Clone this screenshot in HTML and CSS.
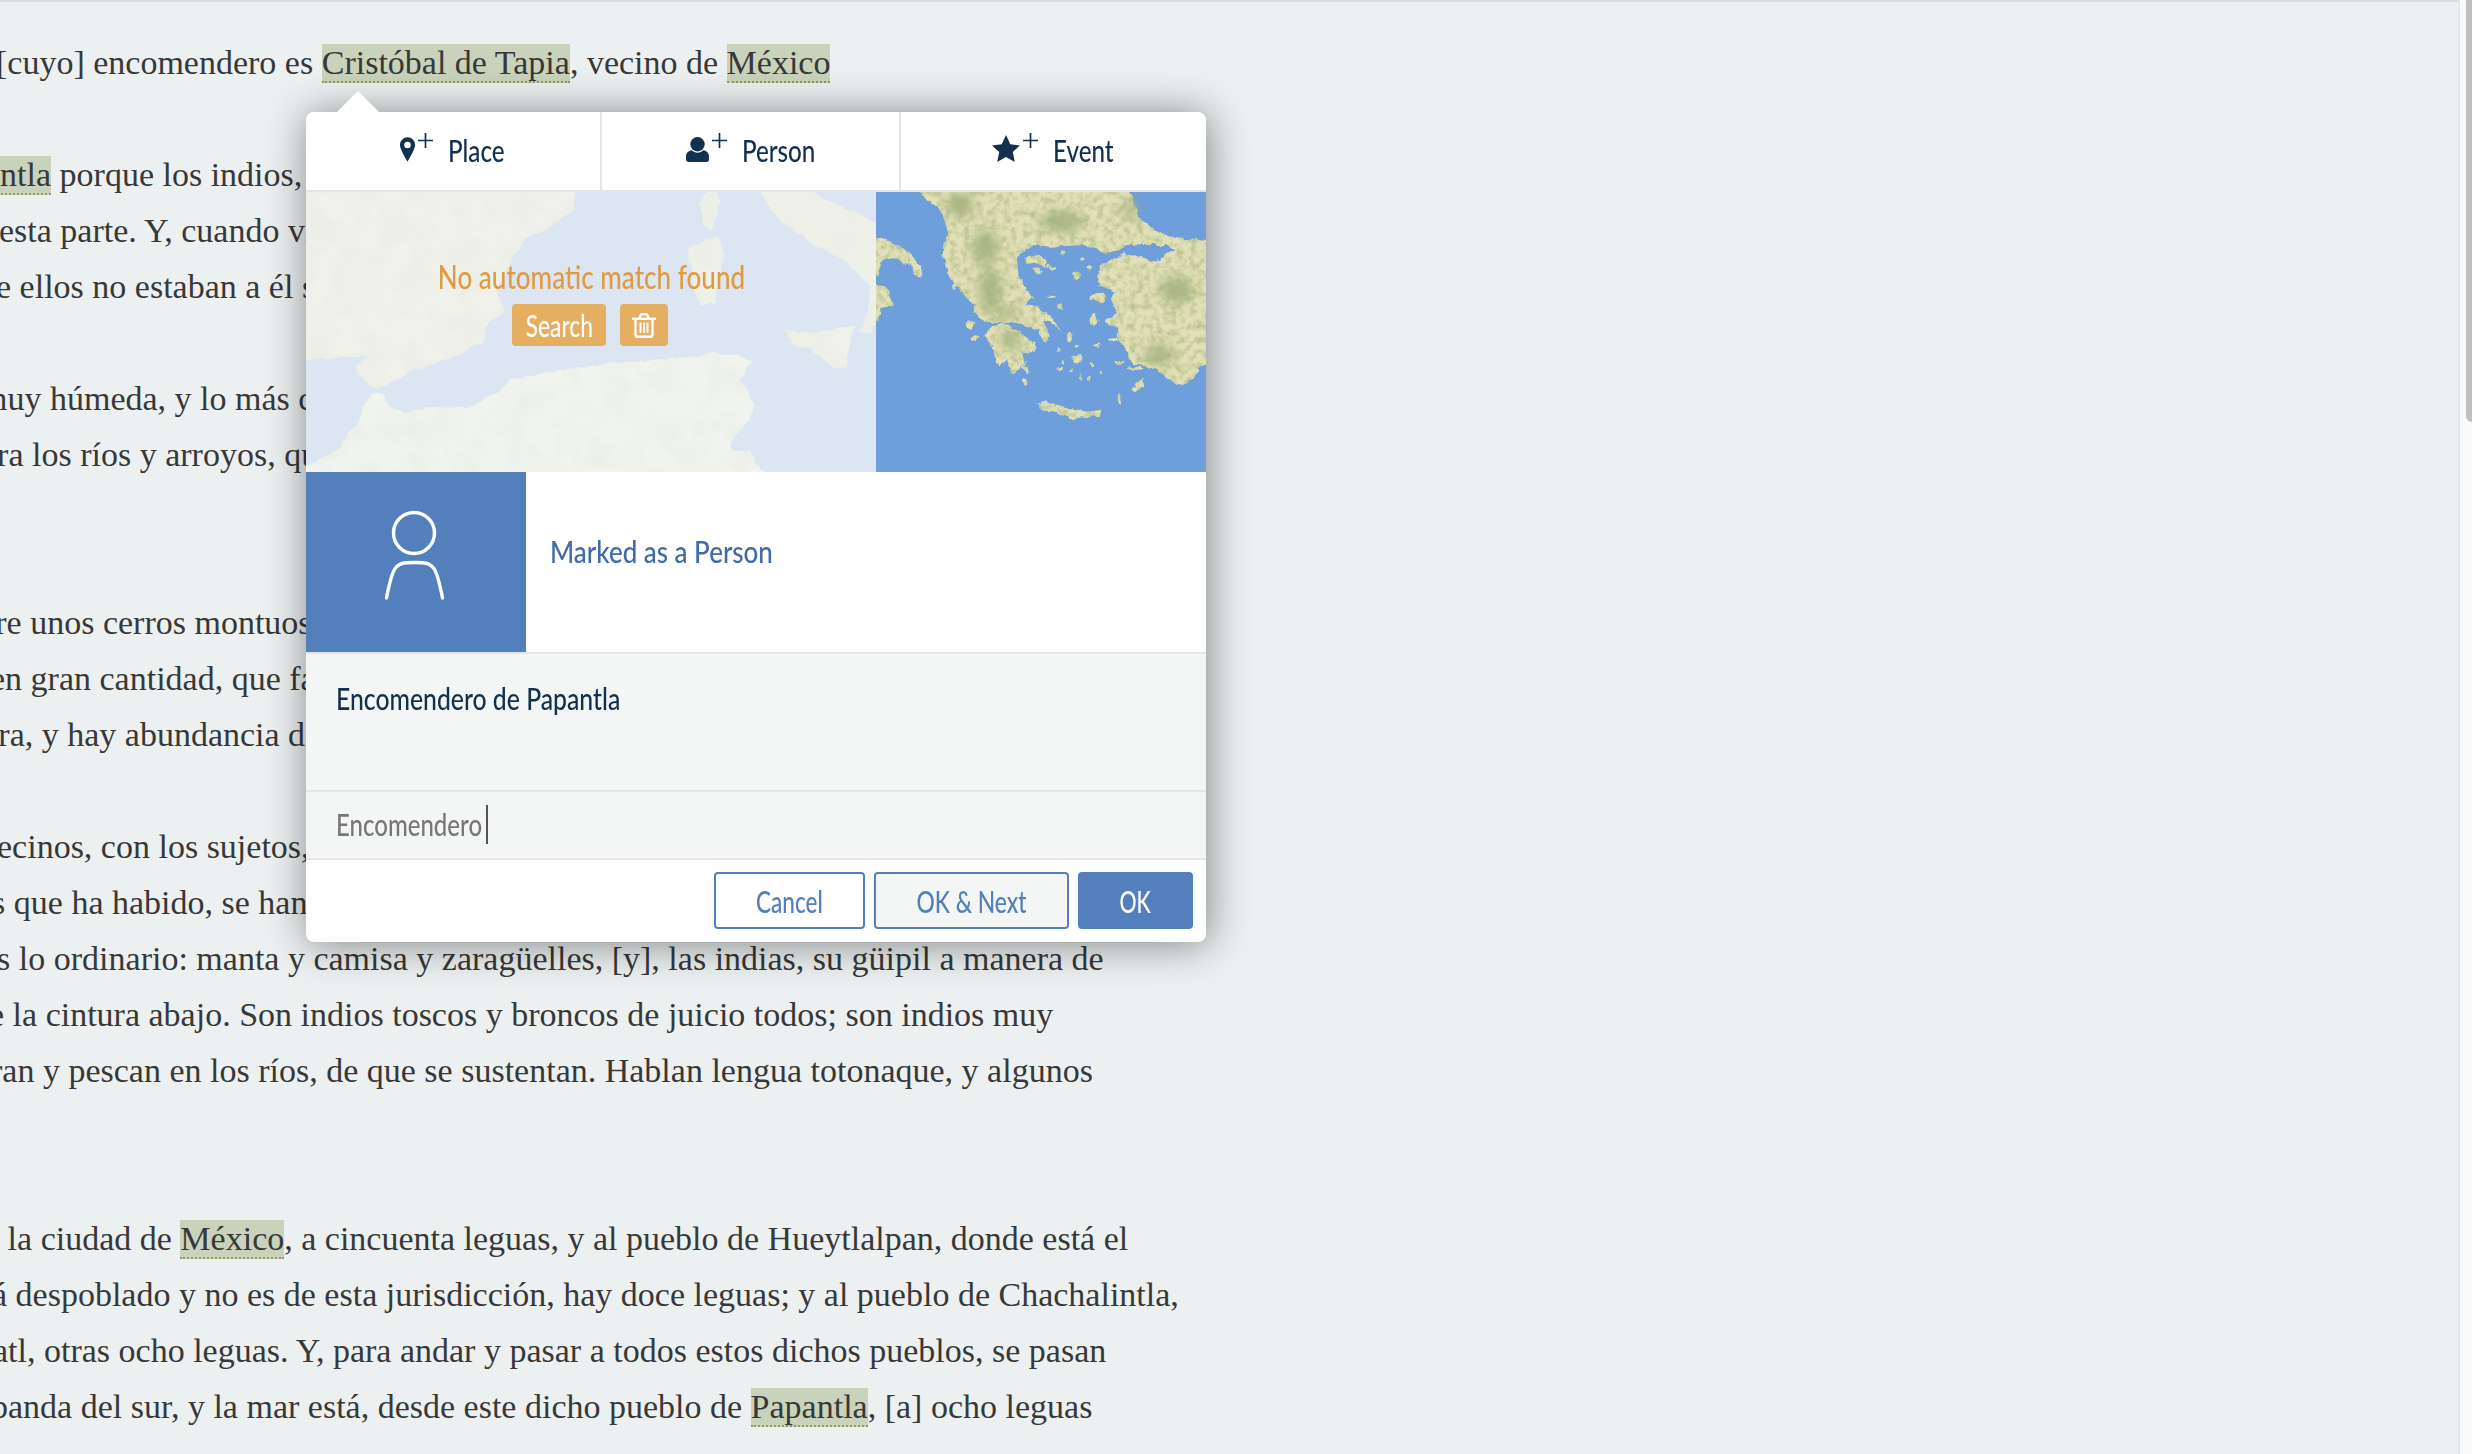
FILE: index.html
```html
<!DOCTYPE html>
<html lang="es">
<head>
<meta charset="utf-8">
<title>Annotation</title>
<link rel="stylesheet" href="styles.css">
</head>
<body>
<div class="page">
  <main class="doc">
    <div class="para">
      <p class="ln i-4">[cuyo] encomendero es <mark class="tag">Cristóbal de Tapia</mark>, vecino de <mark class="tag">México</mark></p>
    </div>
    <div class="para">
      <p class="ln i-pap"><mark class="tag">Papantla</mark> porque los indios, </p>
      <p class="ln i-1">esta parte. Y, cuando vienen</p>
      <p class="ln i-de">de ellos no estaban a él sujetos</p>
    </div>
    <div class="para wide">
      <p class="ln i-muy">muy húmeda, y lo más cerca</p>
      <p class="ln i-para">para los ríos y arroyos, que</p>
    </div>
    <div class="para">
      <p class="ln i-sobre">sobre unos cerros montuosos</p>
      <p class="ln i-en">en gran cantidad, que falta</p>
      <p class="ln i-tierra">tierra, y hay abundancia de</p>
    </div>
    <div class="para wide">
      <p class="ln i-vec">vecinos, con los sujetos,</p>
      <p class="ln i-anos">años que ha habido, se han</p>
      <p class="ln i-es">es lo ordinario: manta y camisa y zaragüelles, [y], las indias, su güipil a manera de</p>
      <p class="ln i-dela">de la cintura abajo. Son indios toscos y broncos de juicio todos; son indios muy</p>
      <p class="ln i-ran">ran y pescan en los ríos, de que se sustentan. Hablan lengua totonaque, y algunos</p>
    </div>
    <div class="para">
      <p class="ln i-ala">a la ciudad de <mark class="tag">México</mark>, a cincuenta leguas, y al pueblo de Hueytlalpan, donde está el</p>
      <p class="ln i-a">á despoblado y no es de esta jurisdicción, hay doce leguas; y al pueblo de Chachalintla,</p>
      <p class="ln i-atl">atl, otras ocho leguas. Y, para andar y pasar a todos estos dichos pueblos, se pasan</p>
      <p class="ln i-banda">banda del sur, y la mar está, desde este dicho pueblo de <mark class="tag">Papantla</mark>, [a] ocho leguas</p>
    </div>
  </main>
  <aside class="scrollbar"><div class="thumb"></div></aside>
</div>

<section class="popup">
  <div class="arrow"></div>
  <div class="card">
    <nav class="tabs">
      <div class="tab t1">
        <svg class="ico-pin" viewBox="0 0 16 26"><path fill="#12304f" fill-rule="evenodd" d="M8 0a8 8 0 0 1 8 8.200c0 4.300-4.600 12-8 17.800C4.600 20.200 0 12.500 0 8.200A8 8 0 0 1 8 0zm0 4.600a3.500 3.500 0 1 0 0 7 3.500 3.500 0 0 0 0-7z"/></svg>
        <svg class="ico-plus" viewBox="0 0 15 15"><path stroke="#12304f" stroke-width="1.700" d="M7.500 0v15M0 7.500h15"/></svg>
        <span class="tab-label"><span class="nar lbl-tab">Place</span></span>
      </div>
      <div class="tab t2">
        <svg class="ico-user" viewBox="0 0 24 26"><g fill="#12304f"><ellipse cx="12" cy="7.500" rx="7.500" ry="7.500"/><path d="M6 13.800c1.500 1.500 3.700 2.500 6 2.500s4.500-1 6-2.500c3.500.5 6 3 6 6.500v3.200c0 1.400-1.100 2.500-2.500 2.500h-19A2.500 2.500 0 0 1 0 23.500v-3.200c0-3.500 2.500-6 6-6.500z"/></g></svg>
        <svg class="ico-plus" viewBox="0 0 15 15"><path stroke="#12304f" stroke-width="1.700" d="M7.500 0v15M0 7.500h15"/></svg>
        <span class="tab-label"><span class="nar lbl-tab">Person</span></span>
      </div>
      <div class="tab t3">
        <svg class="ico-star" viewBox="0 0 28 27"><path fill="#12304f" d="M14 0l4.300 9.300 9.700 1.100-7.200 6.700 2 9.900-8.800-5-8.800 5 2-9.900L0 10.400l9.700-1.100z"/></svg>
        <svg class="ico-plus" viewBox="0 0 15 15"><path stroke="#12304f" stroke-width="1.700" d="M7.500 0v15M0 7.500h15"/></svg>
        <span class="tab-label"><span class="nar lbl-tab">Event</span></span>
      </div>
    </nav>

    <div class="map">
      <svg class="map-left" viewBox="0 0 570 280" preserveAspectRatio="none">
        <defs>
          <filter id="pale" filterUnits="userSpaceOnUse" x="0" y="0" width="570" height="280" color-interpolation-filters="sRGB">
            <feTurbulence type="fractalNoise" baseFrequency=".08" numOctaves="3" seed="7" result="d"/>
            <feDisplacementMap in="SourceGraphic" in2="d" scale="6" xChannelSelector="R" yChannelSelector="G" result="land"/>
            <feTurbulence type="fractalNoise" baseFrequency=".04" numOctaves="4" seed="3" result="t"/>
            <feColorMatrix in="t" type="matrix" values="0 0 0 0 .90  0 0 0 0 .92  0 0 0 0 .88  1 0 0 0 -.4" result="g"/>
            <feComposite in="g" in2="land" operator="in" result="gl"/>
            <feMerge><feMergeNode in="land"/><feMergeNode in="gl"/></feMerge>
          </filter>
        </defs>
        <rect width="570" height="280" fill="#dce6f2"/>
        <g filter="url(#pale)">
          <path fill="#eff1ea" d="M-10-10H272L266 18 246 35 220 46 205 70 190 98 199 118 179 135 177 151 142 168 116 175 74 195 64 195 49 176 61 165 31 165-10 171Z"/>
          <path fill="#f1f3ee" d="M-10 280 31 258 53 228 64 201 74 201 83 215 98 220 127 215 160 216 190 201 205 188 253 178 308 171 357 168 412 161 427 163 447 168 434 188 447 211 445 228 427 245 425 258 445 258 449 271 468 290-10 290Z"/>
          <path fill="#edf0e8" d="M394 11 405-6 414 5 412 18 406 38 399 33Z"/>
          <path fill="#eff1ea" d="M382 58 401 48 412 45 419 65 412 88 410 111 394 113 388 98 386 75Z"/>
          <path fill="#eff1e8" d="M449-6 471 25 505 51 542 71 564 95 562 121 553 140 564 141 580 121V41L564 28 549 21 519 8 500-6Z"/>
          <path fill="#eff1ea" d="M480 138 512 141 549 133 542 161 540 176 527 175 505 158 486 151Z"/>
        </g>
      </svg>
      <svg class="map-right" viewBox="18 6 990 840" preserveAspectRatio="none">
        <defs>
          <filter id="terrain" filterUnits="userSpaceOnUse" x="18" y="6" width="990" height="840" color-interpolation-filters="sRGB">
            <feTurbulence type="fractalNoise" baseFrequency=".045" numOctaves="3" seed="11" result="d"/>
            <feDisplacementMap in="SourceGraphic" in2="d" scale="18" xChannelSelector="R" yChannelSelector="G" result="land"/>
            <feTurbulence type="fractalNoise" baseFrequency=".05" numOctaves="4" seed="5" result="t"/>
            <feColorMatrix in="t" type="matrix" values="0 0 0 0 .64  0 0 0 0 .70  0 0 0 0 .50  1.500 0 0 0 -.6" result="g"/>
            <feComposite in="g" in2="land" operator="in" result="gl"/>
            <feMerge><feMergeNode in="land"/><feMergeNode in="gl"/></feMerge>
          </filter>
          <filter id="soft" x="-50%" y="-50%" width="200%" height="200%"><feGaussianBlur stdDeviation="16"/></filter>
        </defs>
        <rect x="18" y="6" width="990" height="840" fill="#6f9fdb"/>
        <g filter="url(#terrain)">
          <g fill="#e2e0b6">
            <path d="M120-20H775L790 40 810 85 860 125 920 145 1030 155V520L990 525 970 570 925 585 890 565 860 540 830 530 790 520 770 490 760 460 740 440 745 410 700 395 740 370 725 330 735 305 690 290 680 260 695 225 730 205 770 190 860 215 880 195 915 180 890 165 770 165 740 185 700 195 680 175 640 165 540 170 500 165 470 175 440 205 445 250 470 300 490 325 465 345 500 350 540 375 575 425 545 400 520 390 540 440 525 455 505 420 470 410 430 395 385 400 345 395 305 365 320 345 290 325 260 285 240 270 232 230 218 205 220 165 235 130 225 95 215 65 175 30Z"/>
            <path d="M460 205 510 195 530 215 520 228 495 218 470 222Z"/>
            <path d="M490 235 505 230 515 250 500 255Z"/>
            <path d="M525 225 535 222 555 232 550 240Z"/>
            <path d="M340 435 365 410 400 400 440 420 470 440 495 465 490 485 460 490 475 555 450 530 430 558 410 510 385 525 370 495 360 460Z"/>
            <path d="M505 640 520 630 560 645 600 655 650 665 692 660 690 677 640 682 600 688 560 665 510 660Z"/>
            <path d="M788 600 800 575 824 562 815 590 798 607Z"/>
            <path d="M10 140 60 155 110 180 150 225 158 258 145 266 120 225 70 205 40 210 25 255H10Z"/>
            <path d="M10 285 50 290 68 345 35 350 22 395H10Z"/>
            <circle cx="620" cy="258" r="13"/><circle cx="578" cy="188" r="8"/><ellipse cx="688" cy="323" rx="24" ry="14"/><ellipse cx="672" cy="390" rx="10" ry="19"/><ellipse cx="300" cy="404" rx="13" ry="13"/><ellipse cx="315" cy="444" rx="10" ry="8"/><ellipse cx="465" cy="575" rx="7" ry="9"/><ellipse cx="255" cy="285" rx="6" ry="18"/><ellipse cx="660" cy="235" rx="11" ry="6"/><ellipse cx="640" cy="208" rx="6" ry="5"/><ellipse cx="572" cy="350" rx="7" ry="9"/><ellipse cx="625" cy="505" rx="18" ry="11"/><ellipse cx="570" cy="535" rx="11" ry="5"/><ellipse cx="580" cy="515" rx="5" ry="5"/><ellipse cx="600" cy="440" rx="5" ry="14"/><ellipse cx="620" cy="470" rx="9" ry="5"/><ellipse cx="680" cy="462" rx="12" ry="5"/><ellipse cx="732" cy="450" rx="16" ry="5"/><ellipse cx="665" cy="525" rx="6" ry="7"/><ellipse cx="630" cy="560" rx="4" ry="6"/><ellipse cx="695" cy="548" rx="5" ry="5"/><ellipse cx="750" cy="628" rx="4" ry="18"/><ellipse cx="745" cy="520" rx="12" ry="5"/><ellipse cx="795" cy="535" rx="22" ry="5"/><ellipse cx="565" cy="480" rx="4" ry="8"/><ellipse cx="540" cy="320" rx="14" ry="3"/><ellipse cx="600" cy="540" rx="6" ry="3"/><ellipse cx="655" cy="565" rx="4" ry="4"/>
          </g>
          <g fill="#a3b07c" filter="url(#soft)" opacity=".85">
            <ellipse cx="575" cy="95" rx="65" ry="32"/>
            <ellipse cx="270" cy="45" rx="42" ry="36"/>
            <ellipse cx="345" cy="170" rx="40" ry="50"/>
            <ellipse cx="360" cy="300" rx="32" ry="70"/>
            <ellipse cx="410" cy="368" rx="32" ry="18"/>
            <ellipse cx="780" cy="60" rx="18" ry="34"/>
            <ellipse cx="870" cy="495" rx="45" ry="30"/>
            <ellipse cx="920" cy="300" rx="50" ry="40"/>
            <ellipse cx="420" cy="450" rx="30" ry="26"/>
          </g>
        </g>
      </svg>
      <div class="nomatch">
        <p class="nomatch-msg"><span class="nar lbl-msg">No automatic match found</span></p>
        <div class="nomatch-btns">
          <div class="amber-btn search"><span class="nar lbl-search">Search</span></div>
          <div class="amber-btn trash">
            <svg viewBox="0 0 24 25" class="ico-trash"><g fill="none" stroke="#fff" stroke-width="2.400" stroke-linejoin="round"><path d="M0 5.800h24"/><path d="M7.200 5.400l1.500-3.400c.3-.6.800-.8 1.300-.8h4c.5 0 1 .2 1.300.8l1.500 3.400"/><path d="M3.500 6v15.500c0 1.500.9 2.300 2.100 2.300h12.800c1.200 0 2.100-.8 2.100-2.300V6"/></g><path stroke="#fff" stroke-width="2" d="M8.500 9.500v10.500M12 9.500v10.500M15.500 9.500v10.500"/></svg>
          </div>
        </div>
      </div>
    </div>

    <div class="mark">
      <div class="mark-icon">
        <svg viewBox="0 0 220 180" class="ico-person"><g fill="none" stroke="#fff" stroke-width="3.400" stroke-linecap="round"><circle cx="108" cy="61" r="20.500"/><path d="M80.500 126c2.500-13 5-25 9-30 3-4 6-5 11-5.300 5-.3 11-.3 16 0 5 .3 8 1.300 11 5.300 4 5 6.500 17 9 30"/></g></svg>
      </div>
      <div class="mark-text"><span class="nar lbl-mark">Marked as a Person</span></div>
    </div>

    <div class="comment"><span class="nar lbl-comment">Encomendero de Papantla</span></div>
    <div class="input"><span class="input-val"><span class="nar lbl-input">Encomendero</span></span><span class="caret"></span></div>

    <footer class="foot">
      <div class="btn cancel"><span class="nar lbl-cancel">Cancel</span></div>
      <div class="btn next"><span class="nar lbl-next">OK &amp; Next</span></div>
      <div class="btn ok"><span class="nar lbl-ok">OK</span></div>
    </footer>
  </div>
</section>
</body>
</html>
```

FILE: styles.css
```css
* { box-sizing: border-box; }
html, body { margin: 0; height: 100%; overflow: hidden; }
body { background: #ecf0f1; font-family: "Liberation Serif", "Times New Roman", serif; position: relative; }

.page { display: flex; height: 1454px; }
.doc { flex: 1; min-width: 0; overflow: hidden; border-top: 2px solid #d8dcdf; padding-top: 33px; color: #383838; font-size: 34px; line-height: 56px; }
.para { margin-bottom: 56px; }
.para.wide { margin-bottom: 112px; }
.ln { margin: 0; white-space: nowrap; }
.tag { background: #c9d2bb; color: inherit; border-bottom: 2px dotted #8b9d5c; }

.i-1 { text-indent: -1px; }
.i-4 { text-indent: -4px; }
.i-pap { text-indent: -66px; }
.i-de { text-indent: -21px; }
.i-muy { text-indent: -19px; }
.i-para { text-indent: -35px; }
.i-sobre { text-indent: -52px; }
.i-en { text-indent: -10px; }
.i-tierra { text-indent: -47px; }
.i-vec { text-indent: -20px; }
.i-anos { text-indent: -57px; }
.i-es { text-indent: -18px; }
.i-dela { text-indent: -28px; }
.i-ran { text-indent: -9px; }
.i-ala { text-indent: -16px; }
.i-a { text-indent: -8px; }
.i-atl { text-indent: -7px; }
.i-banda { text-indent: -9px; }

.scrollbar { width: 14px; background: #fafafa; border-left: 2px solid #e4e8ea; padding-left: 6px; }
.thumb { height: 422px; background: #c0c0c0; border-bottom-left-radius: 6px; }

.popup { position: absolute; left: 306px; top: 112px; width: 900px; font-family: Lato, "Noto Sans", sans-serif; font-weight: 500; }
.arrow { position: absolute; left: 31px; top: -21px; width: 0; height: 0; border-left: 21px solid transparent; border-right: 21px solid transparent; border-bottom: 21px solid #fff; }
.card { background: #fff; border-radius: 8px; overflow: hidden; box-shadow: 2px 2px 42px rgba(0, 0, 0, .46); }

/* Narrow humanist face: the label is squeezed around its own box */
.nar { display: inline-block; white-space: nowrap; }
.lbl-tab { font-size: 31px; transform: scaleX(.78); transform-origin: left center; }
.lbl-msg { font-size: 33px; transform: scaleX(.79); }
.lbl-search { font-size: 30px; transform: scaleX(.76); }
.lbl-mark { font-size: 30px; transform: scaleX(.865); transform-origin: left center; }
.lbl-comment { font-size: 30px; transform: scaleX(.825); transform-origin: left center; }
.lbl-input { font-size: 30px; transform: scaleX(.8); transform-origin: left center; }
.lbl-cancel { font-size: 30px; transform: scaleX(.75); }
.lbl-next { font-size: 30px; transform: scaleX(.76); }
.lbl-ok { font-size: 30px; transform: scaleX(.71); }

.tabs { display: flex; height: 80px; border-bottom: 2px solid #e4e5e5; color: #12304f; }
.tab { position: relative; display: flex; align-items: flex-start; line-height: 76px; }
.t1 { width: 296px; border-right: 2px solid #e4e5e5; padding-left: 94px; }
.t2 { width: 299px; border-right: 2px solid #e4e5e5; padding-left: 84px; }
.t3 { flex: 1; padding-left: 91px; }
.tab-label { display: block; height: 78px; margin-left: 15px; }
.ico-pin { width: 15px; height: 25px; margin-top: 25px; }
.ico-user { width: 23px; height: 25px; margin-top: 25px; }
.ico-star { width: 28px; height: 27px; margin-top: 23px; }
.ico-plus { width: 15px; height: 15px; margin: 21px 0 0 3px; }

.map { position: relative; display: flex; height: 280px; }
.map-left { display: block; width: 570px; height: 280px; flex: none; }
.map-right { display: block; width: 330px; height: 280px; flex: none; }
.nomatch { position: absolute; left: 0; top: 62px; width: 570px; text-align: center; }
.nomatch-msg { margin: 0; height: 44px; color: #e09a3f; line-height: 44px; }
.nomatch-btns { display: flex; gap: 14px; margin-top: 6px; padding-left: 206px; }
.amber-btn { height: 42px; background: #e6ae60; border-radius: 4px; color: #fff; display: flex; align-items: center; justify-content: center; }
.search { width: 94px; }
.trash { width: 48px; }
.ico-trash { width: 24px; height: 25px; display: block; }

.mark { display: flex; height: 182px; border-bottom: 2px solid #e4e5e5; }
.mark-icon { width: 220px; height: 180px; background: #5380bd; }
.ico-person { display: block; width: 220px; height: 180px; }
.mark-text { padding: 52px 0 0 24px; color: #3f6ba6; line-height: 54px; }

.comment { height: 138px; background: #f4f6f5; border-bottom: 2px solid #e4e5e5; padding: 16px 30px 0; color: #12304f; line-height: 56px; }
.input { display: flex; align-items: center; height: 68px; background: #f4f6f5; border-bottom: 2px solid #e4e5e5; padding: 0 30px 2px; color: #777; }
.input-val { display: block; width: 150px; }
.caret { width: 2px; height: 39px; background: #555; }

.foot { display: flex; justify-content: flex-end; gap: 9px; height: 82px; padding: 12px 13px 0 0; }
.btn { height: 57px; border: 2px solid #5380bd; border-radius: 4px; display: flex; align-items: center; justify-content: center; color: #5380bd; }
.cancel { width: 151px; background: #fff; }
.next { width: 195px; background: #f4f6f5; }
.ok { width: 115px; background: #5380bd; color: #fff; }
```
